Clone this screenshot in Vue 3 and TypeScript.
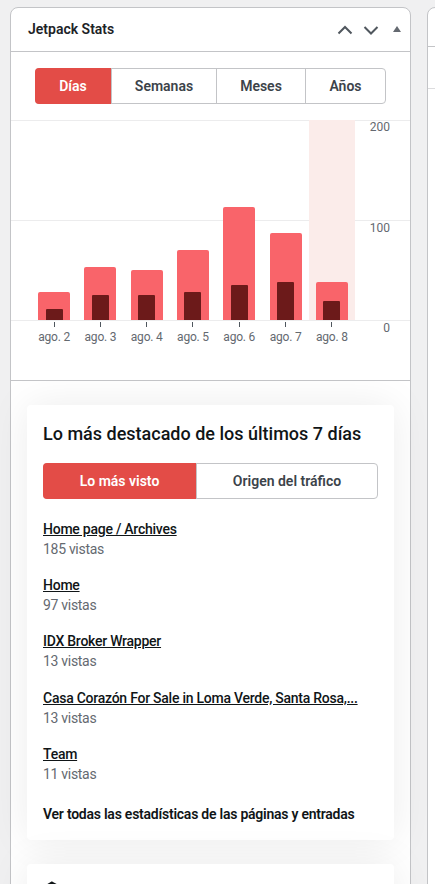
<script setup lang="ts">
const tabs = ['Días', 'Semanas', 'Meses', 'Años'];
const bars = [
  { label: 'ago. 2', outer: 28, inner: 11 },
  { label: 'ago. 3', outer: 53, inner: 25 },
  { label: 'ago. 4', outer: 50, inner: 25 },
  { label: 'ago. 5', outer: 70, inner: 28 },
  { label: 'ago. 6', outer: 113, inner: 35 },
  { label: 'ago. 7', outer: 87, inner: 38 },
  { label: 'ago. 8', outer: 38, inner: 19 },
];
const posts = [
  { title: 'Home page / Archives', views: '185 vistas' },
  { title: 'Home', views: '97 vistas' },
  { title: 'IDX Broker Wrapper', views: '13 vistas' },
  { title: 'Casa Corazón For Sale in Loma Verde, Santa Rosa,...', views: '13 vistas' },
  { title: 'Team', views: '11 vistas' },
];
</script>

<template>
  <div class="page">
    <section class="box">
      <header class="box-head">
        <h2>Jetpack Stats</h2>
        <div class="controls">
          <svg width="16" height="16" viewBox="0 0 16 16"><path d="M1.5 11.5 8 5l6.5 6.5" fill="none" stroke="#50575e" stroke-width="2"/></svg>
          <svg width="16" height="16" viewBox="0 0 16 16"><path d="M1.5 5 8 11.5 14.5 5" fill="none" stroke="#50575e" stroke-width="2"/></svg>
          <svg class="toggle" width="8" height="6" viewBox="0 0 8 6"><path d="M4 0l4 6H0z" fill="#646970"/></svg>
        </div>
      </header>

      <div class="tabs-wrap">
        <div class="seg seg-period">
          <button v-for="(t, i) in tabs" :key="t" class="seg-btn" :class="{ on: i === 0 }">{{ t }}</button>
        </div>
      </div>

      <div class="chart">
        <div class="grid-line l0"></div>
        <div class="grid-line l1"></div>
        <div class="grid-line l2"></div>
        <span class="tick t0">200</span>
        <span class="tick t1">100</span>
        <span class="tick t2">0</span>
        <div class="cols">
          <div v-for="(b, i) in bars" :key="b.label" class="col" :class="{ hl: i === 6 }">
            <div class="plot">
              <div class="bar" :style="{ height: b.outer + 'px' }">
                <div class="inner" :style="{ height: b.inner + 'px' }"></div>
              </div>
            </div>
            <i class="mark"></i>
            <span class="day">{{ b.label }}</span>
          </div>
        </div>
      </div>

      <div class="lower">
        <div class="card">
          <h3>Lo más destacado de los últimos 7 días</h3>
          <div class="seg seg-top">
            <button class="seg-btn on">Lo más visto</button>
            <button class="seg-btn">Origen del tráfico</button>
          </div>
          <ul class="posts">
            <li v-for="p in posts" :key="p.title">
              <a>{{ p.title }}</a>
              <span>{{ p.views }}</span>
            </li>
          </ul>
          <a class="all">Ver todas las estadísticas de las páginas y entradas</a>
        </div>
        <div class="card next">
          <svg width="18" height="18" viewBox="0 0 18 18"><path d="M9 1.5 16 5.5v8l-7 4-7-4v-8z" fill="none" stroke="#101517" stroke-width="2"/></svg>
        </div>
      </div>
    </section>
    <section class="box-next">
      <div class="next-head"></div>
      <div class="next-row"></div>
    </section>
  </div>
</template>

<style>
html, body { margin: 0; background: #f0f0f1; }
</style>

<style scoped>
.page {
  height: 884px;
  overflow: hidden;
  display: flex;
  align-items: flex-start;
  gap: 16px;
  padding: 7px 0 0 10px;
  box-sizing: border-box;
  font-family: Roboto, "Liberation Sans", sans-serif;
  color: #101517;
}
.box {
  flex: 0 0 401px;
  box-sizing: border-box;
  background: #fff;
  border: 1px solid #c3c4c7;
  border-radius: 8px 8px 0 0;
}
.box-next {
  flex: 0 0 100px;
  height: 900px;
  background: #fff;
  border: 1px solid #c3c4c7;
  border-radius: 8px 0 0 0;
}
.next-head { height: 38px; border-bottom: 1px solid #c3c4c7; }
.next-row { height: 41px; border-bottom: 1px solid #dcdcde; }
.box-head {
  display: flex;
  align-items: center;
  justify-content: space-between;
  padding: 0 9px 2px 17px;
  box-sizing: content-box;
  height: 41px;
  border-bottom: 1px solid #c3c4c7;
}
.box-head h2 {
  margin: 0;
  font-size: 14px;
  font-weight: 600;
  color: #1d2327;
}
.controls { display: flex; align-items: center; gap: 10px; margin-top: 2px; }
.toggle { margin-left: 4px; margin-top: -2px; }
.tabs-wrap { padding: 16px 24px 16px; }
.seg {
  display: flex;
  box-sizing: border-box;
  border: 1px solid #c3c4c7;
  border-radius: 4px;
  background: #fff;
}
.seg-period { height: 36px; }
.seg-btn {
  margin: 0;
  padding: 0;
  border: 0;
  background: transparent;
  font: 600 14px Roboto, "Liberation Sans", sans-serif;
  color: #3c434a;
  border-left: 1px solid #c3c4c7;
  flex: 1;
}
.seg-btn:first-child { border-left: 0; }
.seg-btn.on {
  margin: -1px 0 -1px -1px;
  background: #e34c47;
  color: #fff;
  border-radius: 4px 0 0 4px;
}
.seg-period .seg-btn:nth-child(1) { flex: 0 0 76px; }
.seg-period .seg-btn:nth-child(2) { flex: 0 0 105px; }
.seg-period .seg-btn:nth-child(3) { flex: 0 0 89px; }
.seg-period .seg-btn:nth-child(4) { flex: 1; }
.seg-top .seg-btn:nth-child(1) { flex: 0 0 153px; }

.chart {
  position: relative;
  height: 261px;
  border-bottom: 1px solid #c3c4c7;
  box-sizing: border-box;
  padding-left: 20px;
  background: #fff;
}
.grid-line {
  position: absolute;
  left: 0;
  right: 0;
  height: 1px;
  background: #ececed;
}
.l0 { top: 0; }
.l1 { top: 100px; }
.l2 { top: 200px; }
.tick {
  position: absolute;
  right: 20px;
  font-size: 12px;
  line-height: 14px;
  color: #646970;
}
.t0 { top: 0; }
.t1 { top: 101px; }
.t2 { top: 201px; }
.cols { position: relative; display: flex; width: 324px; }
.col {
  flex: 1;
  display: flex;
  flex-direction: column;
  align-items: center;
}
.plot {
  position: relative;
  width: 100%;
  height: 200px;
  display: flex;
  justify-content: center;
  align-items: flex-end;
}
.col.hl .plot { background: #fbecea; }
.bar {
  width: 32px;
  background: #f9646a;
  border-radius: 2px 2px 0 0;
  display: flex;
  justify-content: center;
  align-items: flex-end;
}
.inner { width: 17px; background: #6c1a1a; border-radius: 1px 1px 0 0; }
.mark { width: 1px; height: 5px; margin-top: 2px; background: #50575e; }
.day { margin-top: 3px; font-size: 12px; line-height: 14px; letter-spacing: -0.2px; color: #646970; white-space: nowrap; }

.lower {
  padding: 24px 16px;
  height: 700px;
}
.card {
  background: #fff;
  border-radius: 4px;
  padding: 17px 16px 16px;
  box-shadow: 0 0 40px rgba(0, 0, 0, 0.08);
  height: 435px;
  box-sizing: border-box;
  display: flex;
  flex-direction: column;
}
h3 {
  margin: 0;
  font-size: 18px;
  line-height: 24px;
  font-weight: 500;
  color: #101517;
}
.seg-top { height: 36px; margin-top: 17px; }
.posts { list-style: none; margin: 20px 0 0; padding: 0; }
.posts li { height: 56.25px; display: flex; flex-direction: column; }
.posts a {
  font-size: 14px;
  line-height: 20px;
  font-weight: 500;
  letter-spacing: -0.25px;
  text-decoration: underline;
  color: #101517;
  white-space: nowrap;
}
.posts span { font-size: 14px; line-height: 20px; letter-spacing: -0.3px; color: #646970; }
.all { margin-top: 4px; font-size: 14px; line-height: 20px; font-weight: 600; letter-spacing: -0.24px; color: #101517; }
.next { margin-top: 24px; height: 200px; }
</style>
